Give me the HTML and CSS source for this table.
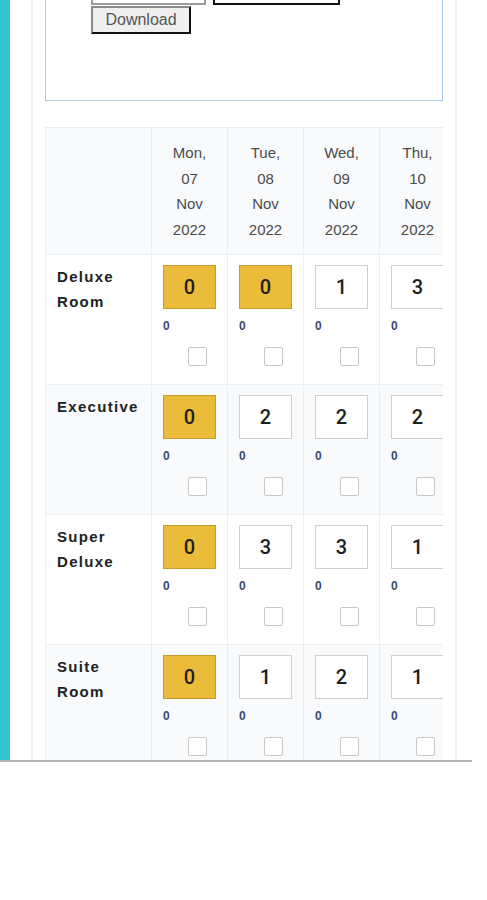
FILE: index.html
```html
<!DOCTYPE html>
<html>
<head>
<meta charset="utf-8">
<link rel="stylesheet" href="styles.css">
</head>
<body>
<div class="frame">
  <div class="sidebar"></div>
  <div class="main">
    <div class="card">
      <div class="filters">
        <div class="filter-row">
          <input class="field" type="text">
          <button class="dark-btn" type="button"></button>
        </div>
        <button class="dl-btn" type="button">Download</button>
      </div>
      <div class="table-wrap">
        <table class="grid">
          <colgroup>
            <col class="c-label"><col class="c-day"><col class="c-day"><col class="c-day"><col class="c-day">
          </colgroup>
          <thead>
            <tr class="shade">
              <th></th>
              <th>Mon,<br>07<br>Nov<br>2022</th>
              <th>Tue,<br>08<br>Nov<br>2022</th>
              <th>Wed,<br>09<br>Nov<br>2022</th>
              <th>Thu,<br>10<br>Nov<br>2022</th>
            </tr>
          </thead>
          <tbody>
            <tr>
              <td class="room">Deluxe<br>Room</td>
              <td><div class="qty hot">0</div><div class="sub">0</div><span class="chk"></span></td>
              <td><div class="qty hot">0</div><div class="sub">0</div><span class="chk"></span></td>
              <td><div class="qty">1</div><div class="sub">0</div><span class="chk"></span></td>
              <td><div class="qty">3</div><div class="sub">0</div><span class="chk"></span></td>
            </tr>
            <tr class="shade">
              <td class="room">Executive</td>
              <td><div class="qty hot">0</div><div class="sub">0</div><span class="chk"></span></td>
              <td><div class="qty">2</div><div class="sub">0</div><span class="chk"></span></td>
              <td><div class="qty">2</div><div class="sub">0</div><span class="chk"></span></td>
              <td><div class="qty">2</div><div class="sub">0</div><span class="chk"></span></td>
            </tr>
            <tr>
              <td class="room">Super<br>Deluxe</td>
              <td><div class="qty hot">0</div><div class="sub">0</div><span class="chk"></span></td>
              <td><div class="qty">3</div><div class="sub">0</div><span class="chk"></span></td>
              <td><div class="qty">3</div><div class="sub">0</div><span class="chk"></span></td>
              <td><div class="qty">1</div><div class="sub">0</div><span class="chk"></span></td>
            </tr>
            <tr class="shade">
              <td class="room">Suite<br>Room</td>
              <td><div class="qty hot">0</div><div class="sub">0</div><span class="chk"></span></td>
              <td><div class="qty">1</div><div class="sub">0</div><span class="chk"></span></td>
              <td><div class="qty">2</div><div class="sub">0</div><span class="chk"></span></td>
              <td><div class="qty">1</div><div class="sub">0</div><span class="chk"></span></td>
            </tr>
          </tbody>
        </table>
      </div>
    </div>
  </div>
</div>
</body>
</html>
```

FILE: styles.css
```css
html, body {
  margin: 0;
  padding: 0;
  background: #ffffff;
  font-family: "Liberation Sans", Arial, sans-serif;
}

.frame {
  display: flex;
  width: 472px;
  height: 760px;
  border-bottom: 2px solid #b4b4b4;
  overflow: hidden;
}

.sidebar {
  width: 10px;
  flex: none;
  background: #33c5d1;
}

.main {
  flex: 1;
  padding-left: 21px;
  overflow: hidden;
}

.card {
  width: 426px;
  min-height: 900px;
  border-left: 2px solid #efefef;
  border-right: 2px solid #efefef;
  padding: 0 12px;
  box-sizing: border-box;
}

.filters {
  margin-top: -30px;
  border: 1px solid #a9cdef;
  padding: 4px 0 66px 45px;
  width: 398px;
  box-sizing: border-box;
}

.filter-row {
  display: flex;
  gap: 7px;
  height: 30px;
  margin-bottom: 1px;
}

.field {
  width: 115px;
  height: 30px;
  box-sizing: border-box;
  border: 2px solid #9a9a9a;
  background: #fff;
  padding: 0;
  margin: 0;
}

.dark-btn {
  width: 127px;
  height: 30px;
  box-sizing: border-box;
  border: 2px solid #111;
  background: #fff;
  margin: 0;
}

.dl-btn {
  display: block;
  width: 100px;
  height: 28px;
  box-sizing: border-box;
  margin: 0;
  padding: 0 0 1px;
  background: #efefef;
  border: 2px solid;
  border-color: #8a8a8a #111 #111 #8a8a8a;
  font-family: "Liberation Sans", Arial, sans-serif;
  font-size: 16px;
  color: #555;
}

.table-wrap {
  margin-top: 26px;
  width: 398px;
  overflow: hidden;
}

.grid {
  border-collapse: collapse;
  table-layout: fixed;
  width: 410px;
  border: 1px solid #edf0f3;
}

.c-label { width: 106px; }
.c-day { width: 76px; }

.grid th,
.grid td {
  border: 1px solid #eceff2;
  vertical-align: top;
  padding: 0;
}

.grid th {
  height: 126px;
  box-sizing: border-box;
  padding: 12px 0;
  font-weight: normal;
  font-size: 15px;
  line-height: 25.5px;
  color: #4b4b4b;
  text-align: center;
}

.grid td {
  height: 130px;
  box-sizing: border-box;
  padding: 10px 0 0 11px;
}

.shade th,
.shade td {
  background: #f8fafc;
}

.grid td.room {
  padding: 9px 0 0 11px;
  font-weight: bold;
  font-size: 15px;
  line-height: 25px;
  letter-spacing: 1.3px;
  color: #222;
}

.qty {
  width: 53px;
  height: 44px;
  box-sizing: border-box;
  border: 1px solid #cfcfcf;
  background: #fff;
  display: flex;
  align-items: center;
  justify-content: center;
  font-family: Roboto, "Liberation Sans", Arial, sans-serif;
  font-size: 20px;
  font-weight: 500;
  color: #1f1f1f;
}

.qty.hot {
  background: #ebbb3a;
  border-color: #c59d2e;
}

.sub {
  margin-top: 10px;
  font-size: 12px;
  font-weight: bold;
  line-height: 14px;
  color: #3a4a70;
}

.chk {
  display: block;
  width: 19px;
  height: 19px;
  box-sizing: border-box;
  margin: 14px 0 0 25px;
  border: 1px solid #c8c8c8;
  border-radius: 2px;
  background: #fff;
}
```
